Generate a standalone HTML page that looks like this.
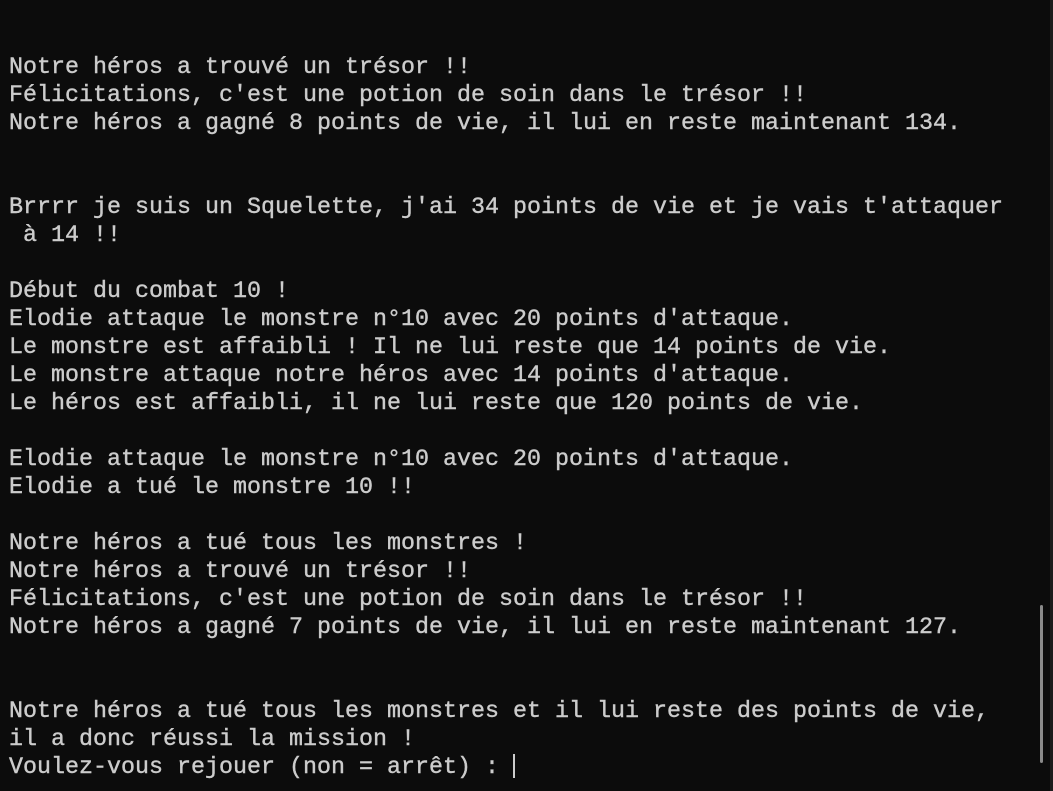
<!DOCTYPE html>
<html><head><meta charset="utf-8"><style>
html,body{margin:0;padding:0;background:#0c0c0c;width:1053px;height:791px;overflow:hidden}
pre{position:absolute;left:9px;top:54px;margin:0;font-family:"Liberation Mono",monospace;font-size:23.33px;line-height:28px;color:#cccccc;font-weight:normal;-webkit-text-stroke:0.4px #cccccc}
.sb{position:absolute;left:1040px;top:605px;width:3px;height:158px;background:#8a8a8a;border-radius:2px}
.edge{position:absolute;left:1050px;top:0;width:3px;height:791px;background:#1c1c1c}
.cur{display:inline-block;width:2px;height:24px;background:#ccc;vertical-align:-5px}
</style></head><body>
<div class="edge"></div>
<pre>Notre héros a trouvé un trésor !!
Félicitations, c'est une potion de soin dans le trésor !!
Notre héros a gagné 8 points de vie, il lui en reste maintenant 134.


Brrrr je suis un Squelette, j'ai 34 points de vie et je vais t'attaquer
 à 14 !!

Début du combat 10 !
Elodie attaque le monstre n°10 avec 20 points d'attaque.
Le monstre est affaibli ! Il ne lui reste que 14 points de vie.
Le monstre attaque notre héros avec 14 points d'attaque.
Le héros est affaibli, il ne lui reste que 120 points de vie.

Elodie attaque le monstre n°10 avec 20 points d'attaque.
Elodie a tué le monstre 10 !!

Notre héros a tué tous les monstres !
Notre héros a trouvé un trésor !!
Félicitations, c'est une potion de soin dans le trésor !!
Notre héros a gagné 7 points de vie, il lui en reste maintenant 127.


Notre héros a tué tous les monstres et il lui reste des points de vie,
il a donc réussi la mission !
Voulez-vous rejouer (non = arrêt) : <span class="cur"></span></pre>
<div class="sb"></div>
</body></html>
